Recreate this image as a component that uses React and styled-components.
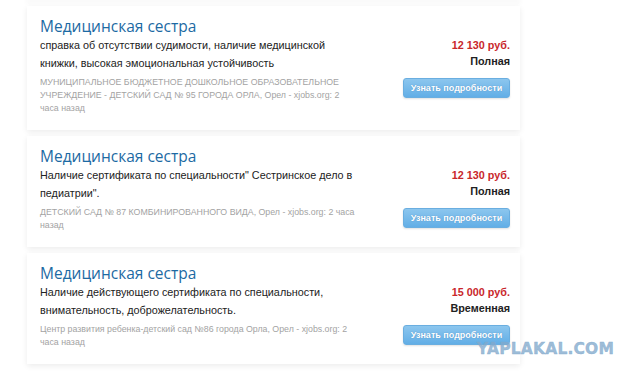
import React from "react";
import styled, { createGlobalStyle } from "styled-components";

const GlobalStyle = createGlobalStyle`
  body {
    margin: 0;
    background: #fff;
    font-family: "Liberation Sans", Arial, sans-serif;
  }
`;

const Page = styled.div`
  position: relative;
  width: 640px;
  height: 380px;
  overflow: hidden;
  background: #fff;
`;

const List = styled.div`
  display: flex;
  flex-direction: column;
  gap: 6px;
  width: 493px;
  margin-left: 27px;
`;

const PrevEdge = styled.div`
  height: 0;
  box-shadow: 0 1px 5px 1px rgba(0, 0, 0, 0.07);
`;

const Card = styled.div`
  background: #fff;
  padding: 10px 10px 15px 13px;
  box-shadow: 0 2px 6px rgba(0, 0, 0, 0.08);
`;

const Title = styled.div`
  font-family: "Open Sans", "DejaVu Sans", sans-serif;
  font-size: 15.5px;
  line-height: 20px;
  color: #1c6aa3;
`;

const Body = styled.div`
  display: flex;
  justify-content: space-between;
`;

const Left = styled.div`
  width: 316px;
`;

const Desc = styled.div`
  font-size: 10.8px;
  line-height: 18px;
  color: #222;
`;

const Meta = styled.div`
  margin-top: 4px;
  font-size: 8.8px;
  line-height: 13px;
  color: #a3a3a3;
`;

const Right = styled.div`
  display: flex;
  flex-direction: column;
  align-items: flex-end;
  padding-top: 1px;
`;

const Price = styled.div`
  font-size: 10.8px;
  line-height: 16px;
  font-weight: bold;
  color: #c9272b;
`;

const Kind = styled.div`
  font-size: 10.8px;
  line-height: 16px;
  font-weight: bold;
  color: #222;
`;

const Button = styled.button`
  margin-top: 9px;
  height: 20px;
  width: 107px;
  padding: 0;
  border: 1px solid #6aaee0;
  border-radius: 3px;
  background: linear-gradient(#8cc6ee, #62aee6);
  color: #fff;
  font-family: "Liberation Sans", Arial, sans-serif;
  font-size: 9px;
  font-weight: bold;
  white-space: nowrap;
  text-shadow: 0 0 1px rgba(30, 90, 150, 0.5);
  box-shadow: 0 1px 2px rgba(0, 0, 0, 0.12);
  cursor: pointer;
`;

const Watermark = styled.div`
  position: absolute;
  left: 477px;
  top: 340px;
  font-family: "DejaVu Sans", Verdana, sans-serif;
  font-weight: bold;
  font-size: 15.5px;
  letter-spacing: 0.2px;
  color: rgba(130, 170, 205, 0.8);
  -webkit-text-stroke: 0.4px rgba(130, 170, 205, 0.8);
`;

const jobs = [
  {
    desc: "справка об отсутствии судимости, наличие медицинской книжки, высокая эмоциональная устойчивость",
    meta: "МУНИЦИПАЛЬНОЕ БЮДЖЕТНОЕ ДОШКОЛЬНОЕ ОБРАЗОВАТЕЛЬНОЕ УЧРЕЖДЕНИЕ - ДЕТСКИЙ САД № 95 ГОРОДА ОРЛА, Орел - xjobs.org: 2 часа назад",
    price: "12 130 руб.",
    kind: "Полная",
  },
  {
    desc: "Наличие сертификата по специальности\" Сестринское дело в педиатрии\".",
    meta: "ДЕТСКИЙ САД № 87 КОМБИНИРОВАННОГО ВИДА, Орел - xjobs.org: 2 часа назад",
    price: "12 130 руб.",
    kind: "Полная",
  },
  {
    desc: "Наличие действующего сертификата по специальности, внимательность, доброжелательность.",
    meta: "Центр развития ребенка-детский сад №86 города Орла, Орел - xjobs.org: 2 часа назад",
    price: "15 000 руб.",
    kind: "Временная",
  },
];

export default function App() {
  return (
    <Page>
      <GlobalStyle />
      <List>
        <PrevEdge />
        {jobs.map((job, i) => (
          <Card key={i}>
            <Title>Медицинская сестра</Title>
            <Body>
              <Left>
                <Desc>{job.desc}</Desc>
                <Meta>{job.meta}</Meta>
              </Left>
              <Right>
                <Price>{job.price}</Price>
                <Kind>{job.kind}</Kind>
                <Button>Узнать подробности</Button>
              </Right>
            </Body>
          </Card>
        ))}
      </List>
      <Watermark>YAPLAKAL.COM</Watermark>
    </Page>
  );
}
